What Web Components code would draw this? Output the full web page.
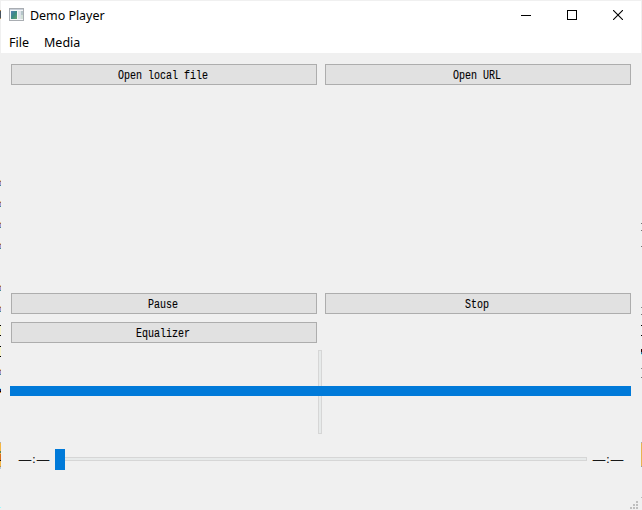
<!DOCTYPE html>
<html lang="en">
<head>
<meta charset="utf-8">
<title>Demo Player</title>
<style>html,body{margin:0;height:100%;overflow:hidden;background:#f0f0f0}</style>
</head>
<body>
<player-window></player-window>
<script>
function define(name, markup) {
  const t = document.createElement('template');
  t.innerHTML = markup;
  customElements.define(name, class extends HTMLElement {
    constructor() {
      super();
      this.attachShadow({ mode: 'open' }).append(t.content.cloneNode(true));
    }
  });
}

define('title-bar', `
<style>
:host{display:flex;height:30px;align-items:center;background:#fff;padding:0 1px 0 8px;font:13px/18px "Noto Sans",sans-serif;color:#000}
.name{flex:1;padding-left:6px;font-size:12.5px;letter-spacing:-.05px}
svg{display:block}
.icon{margin-top:-3px}
.cap{width:46px;display:flex;justify-content:center}
.cap.max{width:45px}
.cap svg{margin-top:-2px}
.cap.close{justify-content:flex-start;padding-left:19px;width:27px}
</style>
<svg class="icon" width="15" height="13" shape-rendering="crispEdges">
<defs><linearGradient id="g" x2="1" y2="1"><stop stop-color="#557eb5"/><stop offset=".5" stop-color="#3b8b84"/><stop offset="1" stop-color="#69a46b"/></linearGradient></defs>
<rect x=".5" y=".5" width="14" height="12" fill="#f4f6f7" stroke="#a9adb2"/><rect x="1" y="1" width="13" height="1" fill="#c9cfd8"/>
<rect x="2" y="3" width="6" height="8" fill="url(#g)"/><rect x="9" y="3" width="3" height="8" fill="#dce2e8"/><rect x="12" y="3" width="2" height="4" fill="#b5c5c9"/><rect x="12" y="7" width="2" height="4" fill="#d2e0d6"/>
</svg>
<span class="name">Demo Player</span>
<span class="cap"><svg width="10" height="10" shape-rendering="crispEdges"><path d="M0 5.5H10" stroke="#000"/></svg></span>
<span class="cap max"><svg width="10" height="10" shape-rendering="crispEdges"><rect x=".5" y=".5" width="9" height="9" fill="none" stroke="#000"/></svg></span>
<span class="cap close"><svg width="10" height="10"><path d="M0 0L10 10M10 0L0 10" stroke="#000" stroke-width="1.1"/></svg></span>`);

define('menu-bar', `
<style>:host{display:flex;height:22px;gap:15px;padding-left:8px;background:#fff;font:12.5px/23px "Noto Sans",sans-serif;color:#000}</style>
<slot></slot>`);

define('push-button', `
<style>
:host{display:flex;box-sizing:border-box;height:21px;border:1px solid #adadad;background:#e1e1e1;align-items:center;justify-content:center;font:10px/12px "Liberation Mono",monospace;color:#000}
span{transform:translate(-1px,1.4px) scaleY(1.2);-webkit-text-stroke:.1px #000}
</style><span><slot></slot></span>`);

define('time-label', `
<style>
:host{display:flex;width:30px;height:14px;margin-top:-2px;font:12px/14px "Liberation Serif",serif;color:#000}
span{white-space:pre}
.d{width:12px;-webkit-text-stroke:.4px #000}.c{width:6px;text-align:center}
</style><span class="d">—</span><span class="c">:</span><span class="d">—</span>`);

define('volume-slider', `
<style>
:host{display:grid;height:84px;justify-items:center;align-items:center}
.groove,.handle{grid-area:1/1}
.groove{box-sizing:border-box;width:4px;height:84px;border:1px solid #d6d6d6;background:#e7eaea;margin-right:2px}
.handle{width:100%;height:10px;background:#007ad9;margin-top:-2px}
</style><div class="groove"></div><div class="handle"></div>`);

define('seek-slider', `
<style>
:host{display:flex;align-items:center;height:21px}
.handle{width:10px;height:21px;background:#007ad9}
.groove{flex:1;box-sizing:border-box;height:4px;border:1px solid #d6d6d6;border-left:0;background:#e7eaea;margin-top:-1px}
</style><div class="handle"></div><div class="groove"></div>`);

define('size-grip', `
<style>:host{display:flex;justify-content:flex-end}svg{display:block}</style>
<svg width="8" height="8" fill="#bfbfbf" shape-rendering="crispEdges"><path d="M6 0h2v2h-2zM3 3h2v2h-2zM6 3h2v2h-2zM0 6h2v2h-2zM3 6h2v2h-2zM6 6h2v2h-2z"/></svg>`);

// Thin strip of whatever sits behind the window's border.
define('edge-strip', `
<style>:host{display:block;width:1px;height:510px}svg{display:block}</style><svg width="1" height="510" shape-rendering="crispEdges"></svg>`);

define('player-window', `
<style>
:host{display:grid;grid-template-columns:1px 640px 1px;width:642px;height:510px;background:#f0f0f0}
main{display:flex;flex-direction:column;padding-top:1px;height:509px}
.content{display:flex;flex-direction:column;padding:11px 10px 0}
.row{display:grid;grid-template-columns:306px 306px;gap:8px}
.video{height:208px}
.row + .row{margin-top:8px}
volume-slider{margin:7px 0 0 -1px}
.seek{display:flex;align-items:center;padding:15px 8px 0 8px;gap:6px}
seek-slider{flex:1}
size-grip{margin:31px 3px 0 0}
</style>
<edge-strip side="left"></edge-strip>
<main>
<title-bar></title-bar>
<menu-bar><span>File</span><span>Media</span></menu-bar>
<div class="content">
<div class="row"><push-button>Open local file</push-button><push-button>Open URL</push-button></div>
<div class="video"></div>
<div class="row"><push-button>Pause</push-button><push-button>Stop</push-button></div>
<div class="row"><push-button>Equalizer</push-button></div>
<volume-slider></volume-slider>
<div class="seek"><time-label></time-label><seek-slider></seek-slider><time-label></time-label></div>
</div>
<size-grip></size-grip>
</main>
<edge-strip side="right"></edge-strip>`);

const marks = { left: [[10,1,'#b58a52'],[11,8,'#46515c'],[18,1,'#b58a52'],
  ...[180,201,222,243,285,306,369].flatMap(y => [[y,1,'#e6c79c'],[y+1,1,'#8d6464'],[y+2,3,'#a69bd0'],[y+5,1,'#468c98']]),
  [325,1,'#000'],[326,9,'#f5f2ca'],[335,1,'#000'],[346,1,'#000'],[347,9,'#f5f2ca'],[356,1,'#000'],
  [388,1,'#8cf0ff'],[389,2,'#182070'],[391,1,'#000'],[392,1,'#d08030'],
  [442,1,'#b0b0b0'],[443,8,'#f5b642'],[451,2,'#5f8250'],[453,1,'#f5b642'],[454,6,'#d96c18'],[460,1,'#241000'],[461,5,'#f5b642'],[466,1,'#b58a52'],[467,2,'#b8c8d0'],[507,1,'#9ff']],
  right: [[223,1,'#777'],[230,1,'#777'],[246,1,'#777'],[307,1,'#888'],[314,1,'#777'],[325,1,'#000'],[335,1,'#000'],[349,3,'#300000'],[352,2,'#2878a0'],[354,1,'#9ff'],[368,1,'#888'],[377,1,'#777'],
  [442,1,'#aaa'],[443,23,'#e8b450'],[466,1,'#999'],[497,1,'#bbb']] };
const win = document.querySelector('player-window').shadowRoot;
for (const s of win.querySelectorAll('edge-strip'))
  s.shadowRoot.querySelector('svg').innerHTML = marks[s.getAttribute('side')]
    .map(([y, h, c]) => `<rect y="${y}" width="1" height="${h}" fill="${c}"/>`).join('');
</script>
</body>
</html>
